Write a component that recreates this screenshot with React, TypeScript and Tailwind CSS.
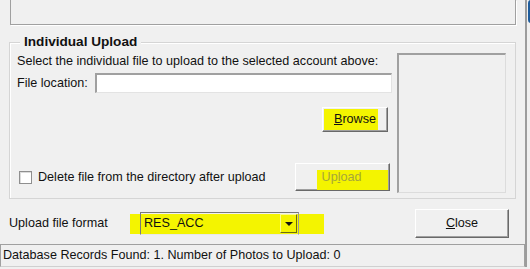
import React from "react";

// classic raised win32 button
function WinButton({
  children,
  className = "",
  disabled = false,
}: {
  children: React.ReactNode;
  className?: string;
  disabled?: boolean;
}) {
  return (
    <div
      className={
        "relative flex items-center justify-center border border-t-white border-l-white border-r-[#696969] border-b-[#696969] bg-[#f0f0f0] shadow-[inset_-1px_-1px_0_#a0a0a0] " +
        (disabled ? "text-[#a6a63a] " : "text-[#111] ") +
        className
      }
    >
      {children}
    </div>
  );
}

export default function App() {
  return (
    <div
      className="w-[530px] h-[269px] bg-[#f0f0f0] flex overflow-hidden text-[12.6px] leading-[15px] text-[#111]"
      style={{ fontFamily: '"Liberation Sans", Arial, sans-serif' }}
    >
      <div className="w-[525px] flex flex-col">
        {/* top panel, cut off by the screenshot */}
        <div className="ml-[10px] w-[506px] h-[25px] border-x border-b border-[#a0a0a0] shadow-[1px_1px_0_#fff]" />

        {/* Individual Upload group */}
        <div className="relative mt-[17px] ml-[9px] w-[507px] h-[157px] border border-[#d5d5d5] shadow-[inset_1px_1px_0_#fff]">
          <div className="absolute left-[10px] top-[-9px] px-[4px] bg-[#f0f0f0] font-bold text-[13.6px]">Individual Upload</div>

          <div className="flex pt-[10px] pl-[7px]">
            <div className="w-[375px] mt-[1px] flex flex-col">
              <div>Select the individual file to upload to the selected account above:</div>
              <div className="mt-[4px] flex items-center h-[20px]">
                <span className="w-[78px]">File location:</span>
                <div className="flex-1 h-[20px] bg-white border-t-2 border-l-2 border-t-[#a0a0a0] border-l-[#a0a0a0] border-r border-b border-r-[#e3e3e3] border-b-[#e3e3e3]" />
              </div>

              <WinButton className="mt-[14px] self-end mr-[4px] w-[66px] h-[25px]">
                <div className="absolute left-[1px] top-[1px] w-[54px] h-[21px] bg-[#f4f400]" />
                <span className="relative">
                  <u>B</u>rowse
                </span>
              </WinButton>

              <div className="mt-[31px] flex items-center h-[28px]">
                <div className="ml-[2px] w-[13px] h-[13px] bg-white border border-[#8f8f8f] shadow-[inset_1px_1px_0_#dcdcdc]" />
                <span className="ml-[6px]">Delete file from the directory after upload</span>
                <WinButton disabled className="ml-auto mr-[2px] w-[95px] h-[28px]">
                  <div className="absolute left-[21px] top-[6px] w-[71px] h-[20px] bg-[#f4f400]" />
                  <span className="relative ml-[-2px]">
                    Up<u>l</u>oad
                  </span>
                </WinButton>
              </div>
            </div>

            {/* preview box */}
            <div className="ml-[5px] w-[109px] h-[140px] border-t-2 border-l-2 border-t-[#a0a0a0] border-l-[#a0a0a0] border-r border-b border-r-[#dcdcdc] border-b-[#dcdcdc]" />
          </div>
        </div>

        {/* format row */}
        <div className="mt-[10px] flex items-center h-[29px] pl-[9px]">
          <span className="w-[131px]">Upload file format</span>
          <div className="relative w-[159px] h-[23px]">
            <div className="absolute left-[-10px] right-[-25px] top-[2px] bottom-[1px] bg-[#f4f400]" />
            <div className="relative h-full flex items-center border border-t-[#7a7a7a] border-l-[#7a7a7a] border-r-[#9a9a9a] border-b-[#e8e8e8]">
              <span className="pl-[3px] flex-1">RES_ACC</span>
              <div className="w-[17px] h-[19px] mr-[1px] flex items-center justify-center border border-t-[#fafa90] border-l-[#fafa90] border-r-[#6b6b10] border-b-[#6b6b10]">
                <div className="w-0 h-0 border-x-[4px] border-x-transparent border-t-[4px] border-t-[#111]" />
              </div>
            </div>
          </div>
          <WinButton className="ml-[116px] w-[94px] h-[29px]">
            <span>
              <u>C</u>lose
            </span>
          </WinButton>
        </div>

        {/* status bar */}
        <div className="mt-[6px] h-[23px] flex items-center pl-[2px] border border-[#a0a0a0] border-b-[#d0d0d0]">
          Database Records Found: 1. Number of Photos to Upload: 0
        </div>
      </div>

      {/* window edge */}
      <div className="w-[5px] h-[267px] border-l-2 border-[#9c9c9c] flex flex-col">
        <div className="ml-[1px] w-[3px] h-[23px] bg-[#1e5c9c] rounded-l-full" />
      </div>
    </div>
  );
}
